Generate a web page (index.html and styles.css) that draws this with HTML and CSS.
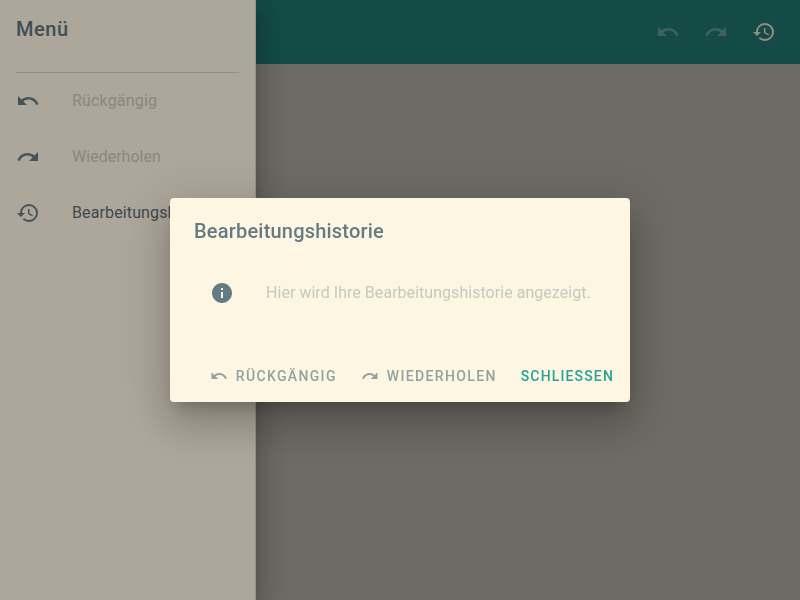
FILE: index.html
```html
<!DOCTYPE html>
<html lang="de">
<head>
<meta charset="utf-8">
<title>Bearbeitungshistorie</title>
<link rel="stylesheet" href="styles.css">
</head>
<body>
<svg class="defs" aria-hidden="true">
  <symbol id="undo" viewBox="0 0 24 24"><path d="M12.5 8c-2.65 0-5.05.99-6.9 2.6L2 7v9h9l-3.62-3.62c1.39-1.16 3.16-1.88 5.12-1.88 3.54 0 6.55 2.31 7.6 5.5l2.37-.78C21.08 11.03 17.15 8 12.5 8z"/></symbol>
  <symbol id="redo" viewBox="0 0 24 24"><path d="M18.4 10.6C16.55 8.99 14.15 8 11.5 8c-4.65 0-8.58 3.03-9.96 7.22L3.9 16c1.05-3.19 4.05-5.5 7.6-5.5 1.95 0 3.73.72 5.12 1.88L13 16h9V7l-3.6 3.6z"/></symbol>
  <symbol id="history" viewBox="0 0 24 24"><path d="M13 3a9 9 0 0 0-9 9H1l3.89 3.89.07.14L9 12H6c0-3.87 3.13-7 7-7s7 3.13 7 7-3.13 7-7 7c-1.93 0-3.68-.79-4.94-2.06l-1.42 1.42A8.954 8.954 0 0 0 13 21a9 9 0 0 0 0-18zm-1 5v5l4.28 2.54.72-1.21-3.5-2.08V8H12z"/></symbol>
  <symbol id="info" viewBox="0 0 24 24"><path d="M12 2C6.48 2 2 6.48 2 12s4.480 10 10 10 10-4.480 10-10S17.520 2 12 2zm1 15h-2v-6h2v6zm0-8h-2V7h2v2z"/></symbol>
</svg>
<div class="app">
  <aside class="drawer">
    <h2 class="drawer-title">Menü</h2>
    <hr class="divider">
    <ul class="menu">
      <li class="menu-item disabled"><svg class="icon"><use href="#undo"/></svg><span>Rückgängig</span></li>
      <li class="menu-item disabled"><svg class="icon"><use href="#redo"/></svg><span>Wiederholen</span></li>
      <li class="menu-item"><svg class="icon"><use href="#history"/></svg><span>Bearbeitungshistorie</span></li>
    </ul>
  </aside>
  <main class="content">
    <header class="bar">
      <svg class="icon faded"><use href="#undo"/></svg>
      <svg class="icon faded"><use href="#redo"/></svg>
      <svg class="icon"><use href="#history"/></svg>
    </header>
  </main>
</div>
<div class="scrim">
  <section class="dialog" role="dialog">
    <h2 class="dialog-title">Bearbeitungshistorie</h2>
    <div class="message"><svg class="icon"><use href="#info"/></svg><span>Hier wird Ihre Bearbeitungshistorie angezeigt.</span></div>
    <footer class="actions">
      <button class="button undo" disabled><svg class="small-icon"><use href="#undo"/></svg>Rückgängig</button>
      <button class="button" disabled><svg class="small-icon"><use href="#redo"/></svg>Wiederholen</button>
      <button class="button close">Schliessen</button>
    </footer>
  </section>
</div>
</body>
</html>
```
FILE: styles.css
```css
* { box-sizing: border-box; }
body { margin: 0; font-family: Roboto, sans-serif; overflow: hidden; }
.defs { display: none; }
.icon { width: 24px; height: 24px; fill: currentColor; flex: none; }
.app { display: flex; height: 100vh; background: #6e6b64; }
.drawer { width: 256px; flex: none; background: #ada69a; color: #3e4f56; border-right: 1px solid #979085; z-index: 1; box-shadow: 0 8px 10px -5px rgba(0,0,0,.2), 0 16px 24px 2px rgba(0,0,0,.14), 0 6px 30px 5px rgba(0,0,0,.12); }
.drawer-title { margin: 0; padding: 13px 16px 0; height: 72px; font-size: 20px; line-height: 32px; font-weight: 500; letter-spacing: .55px; }
.divider { margin: 0 16px; border: 0; border-top: 1px solid #929084; }
.menu { list-style: none; margin: 0; padding: 0; }
.menu-item { display: flex; align-items: center; gap: 32px; height: 56px; padding: 0 16px; overflow: hidden; font-size: 16px; letter-spacing: .12px; white-space: nowrap; color: #3a4a50; }
.menu-item .icon { color: #44545b; }
.menu-item span, .message span { padding-bottom: 2px; }
.menu-item.disabled:first-child { letter-spacing: .17px; }
.menu-item.disabled:nth-child(2) { letter-spacing: .02px; }
.disabled span { color: #88887e; }
.content { flex: 1; }
.bar { display: flex; justify-content: flex-end; align-items: center; gap: 24px; height: 64px; padding: 0 24px; background: #144b46; color: #978c7f; }
.faded { color: #ada69a; opacity: .27; }
.scrim { position: fixed; inset: 0; z-index: 2; display: flex; align-items: center; justify-content: center; }
.dialog { width: 460px; height: 204px; display: flex; flex-direction: column; border-radius: 4px; background: #fdf6e3; color: #657b83; box-shadow: 0 11px 15px -7px rgba(0,0,0,.2), 0 24px 38px 3px rgba(0,0,0,.14), 0 9px 46px 8px rgba(0,0,0,.12); }
.dialog-title { margin: 0; padding: 17px 24px 0; font-size: 20px; line-height: 32px; font-weight: 500; letter-spacing: .2px; }
.message { display: flex; align-items: center; gap: 32px; height: 56px; margin-top: 18px; padding: 0 40px; font-size: 16px; letter-spacing: .04px; white-space: nowrap; }
.message span { color: #c5c9bf; }
.actions { display: flex; justify-content: flex-end; gap: 8px; margin-top: auto; padding: 8px; }
.button { display: flex; align-items: center; height: 36px; padding: 0 8px; border: 0; background: none; font: 500 14px Roboto, sans-serif; letter-spacing: 1.35px; text-transform: uppercase; color: #2aa198; }
.close { letter-spacing: 1.15px; }
.button:disabled { color: #93a1a1; }
.small-icon { width: 18px; height: 18px; margin-right: 8px; fill: currentColor; }
```
